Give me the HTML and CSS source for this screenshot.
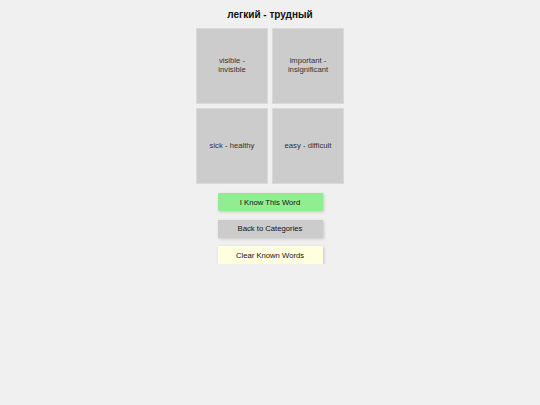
FILE: index.html
```html
<!DOCTYPE html>
<html lang="ru">
<head>
<meta charset="utf-8">
<title>легкий - трудный</title>
<link rel="stylesheet" href="styles.css">
</head>
<body>
<main class="app">
  <h1 class="title">легкий - трудный</h1>
  <div class="grid">
    <div class="card">visible - invisible</div>
    <div class="card">important - insignificant</div>
    <div class="card">sick - healthy</div>
    <div class="card">easy - difficult</div>
  </div>
  <div class="actions">
    <button class="btn btn-know">I Know This Word</button>
    <button class="btn btn-back">Back to Categories</button>
    <button class="btn btn-clear">Clear Known Words</button>
  </div>
</main>
</body>
</html>
```

FILE: styles.css
```css
html, body {
  margin: 0;
  padding: 0;
  background: #f0f0f0;
  font-family: "Liberation Sans", Arial, sans-serif;
  color: #222;
}

.app {
  display: flex;
  flex-direction: column;
  align-items: center;
  padding-top: 8px;
}

.title {
  margin: 0;
  font-size: 10px;
  line-height: 13px;
  font-weight: bold;
  color: #111;
}

.grid {
  margin-top: 7px;
  display: grid;
  grid-template-columns: 72px 72px;
  grid-auto-rows: 76px;
  gap: 4px;
}

.card {
  box-sizing: border-box;
  background: #cccccc;
  border: 1px solid #d9d9d9;
  display: flex;
  align-items: center;
  justify-content: center;
  text-align: center;
  padding: 0 8px 2px;
  font-size: 7.7px;
  line-height: 9px;
  color: #333;
}

.actions {
  margin-top: 9px;
  display: flex;
  flex-direction: column;
  align-items: center;
  gap: 8.5px;
}

.btn {
  box-sizing: border-box;
  width: 105px;
  height: 18px;
  border: none;
  padding: 0;
  font-family: "Liberation Sans", Arial, sans-serif;
  font-size: 7.7px;
  color: #111;
  box-shadow: 1px 1px 3px rgba(0, 0, 0, 0.18);
}

.btn-know { background: #90ee90; }
.btn-back { background: #cccccc; }
.btn-clear { background: #ffffe0; }
```
